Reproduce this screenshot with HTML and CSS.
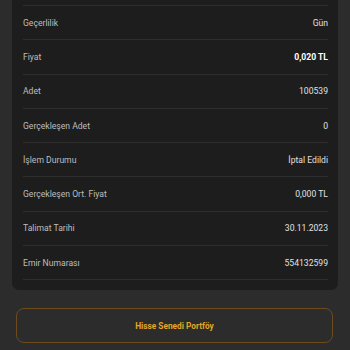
FILE: index.html
```html
<!DOCTYPE html>
<html lang="tr">
<head>
<meta charset="utf-8">
<link rel="stylesheet" href="styles.css">
</head>
<body>
<div class="page">
  <div class="card">
    <div class="list">
      <div class="row"><span class="label">Geçerlilik</span><span class="value">Gün</span></div>
      <div class="row"><span class="label">Fiyat</span><span class="value strong">0,020 TL</span></div>
      <div class="row"><span class="label">Adet</span><span class="value">100539</span></div>
      <div class="row"><span class="label">Gerçekleşen Adet</span><span class="value">0</span></div>
      <div class="row"><span class="label">İşlem Durumu</span><span class="value">İptal Edildi</span></div>
      <div class="row"><span class="label">Gerçekleşen Ort. Fiyat</span><span class="value">0,000 TL</span></div>
      <div class="row"><span class="label">Talimat Tarihi</span><span class="value">30.11.2023</span></div>
      <div class="row"><span class="label">Emir Numarası</span><span class="value">554132599</span></div>
    </div>
  </div>
  <button class="portfolio-btn" type="button">Hisse Senedi Portföy</button>
</div>
</body>
</html>
```

FILE: styles.css
```css
html, body {
  margin: 0;
  padding: 0;
  background: #2c2c2c;
  font-family: Roboto, "Noto Sans", sans-serif;
  overflow: hidden;
}

.page {
  width: 350px;
  height: 350px;
  display: flex;
  flex-direction: column;
}

.card {
  margin: -10px 12px 0 12px;
  padding: 15px 10px 10px 11px;
  background: #1d1d1d;
  border-radius: 0 0 7px 7px;
}

.list {
  border-bottom: 1px solid #2e2e2e;
}

.row {
  height: 33.3px;
  border-top: 1px solid #2e2e2e;
  display: flex;
  align-items: center;
  justify-content: space-between;
  font-size: 8.6px;
}

.label {
  color: #bdbdbd;
}

.value {
  color: #e0e0e0;
}

.value.strong {
  color: #ffffff;
  font-weight: 700;
}

.portfolio-btn {
  margin: 18px 17px 0 16px;
  height: 35px;
  background: transparent;
  border: 1.5px solid #6e4a1c;
  border-radius: 8px;
  color: #e3a625;
  font-family: Roboto, "Noto Sans", sans-serif;
  font-weight: 700;
  font-size: 8.3px;
  padding: 0;
}
```
